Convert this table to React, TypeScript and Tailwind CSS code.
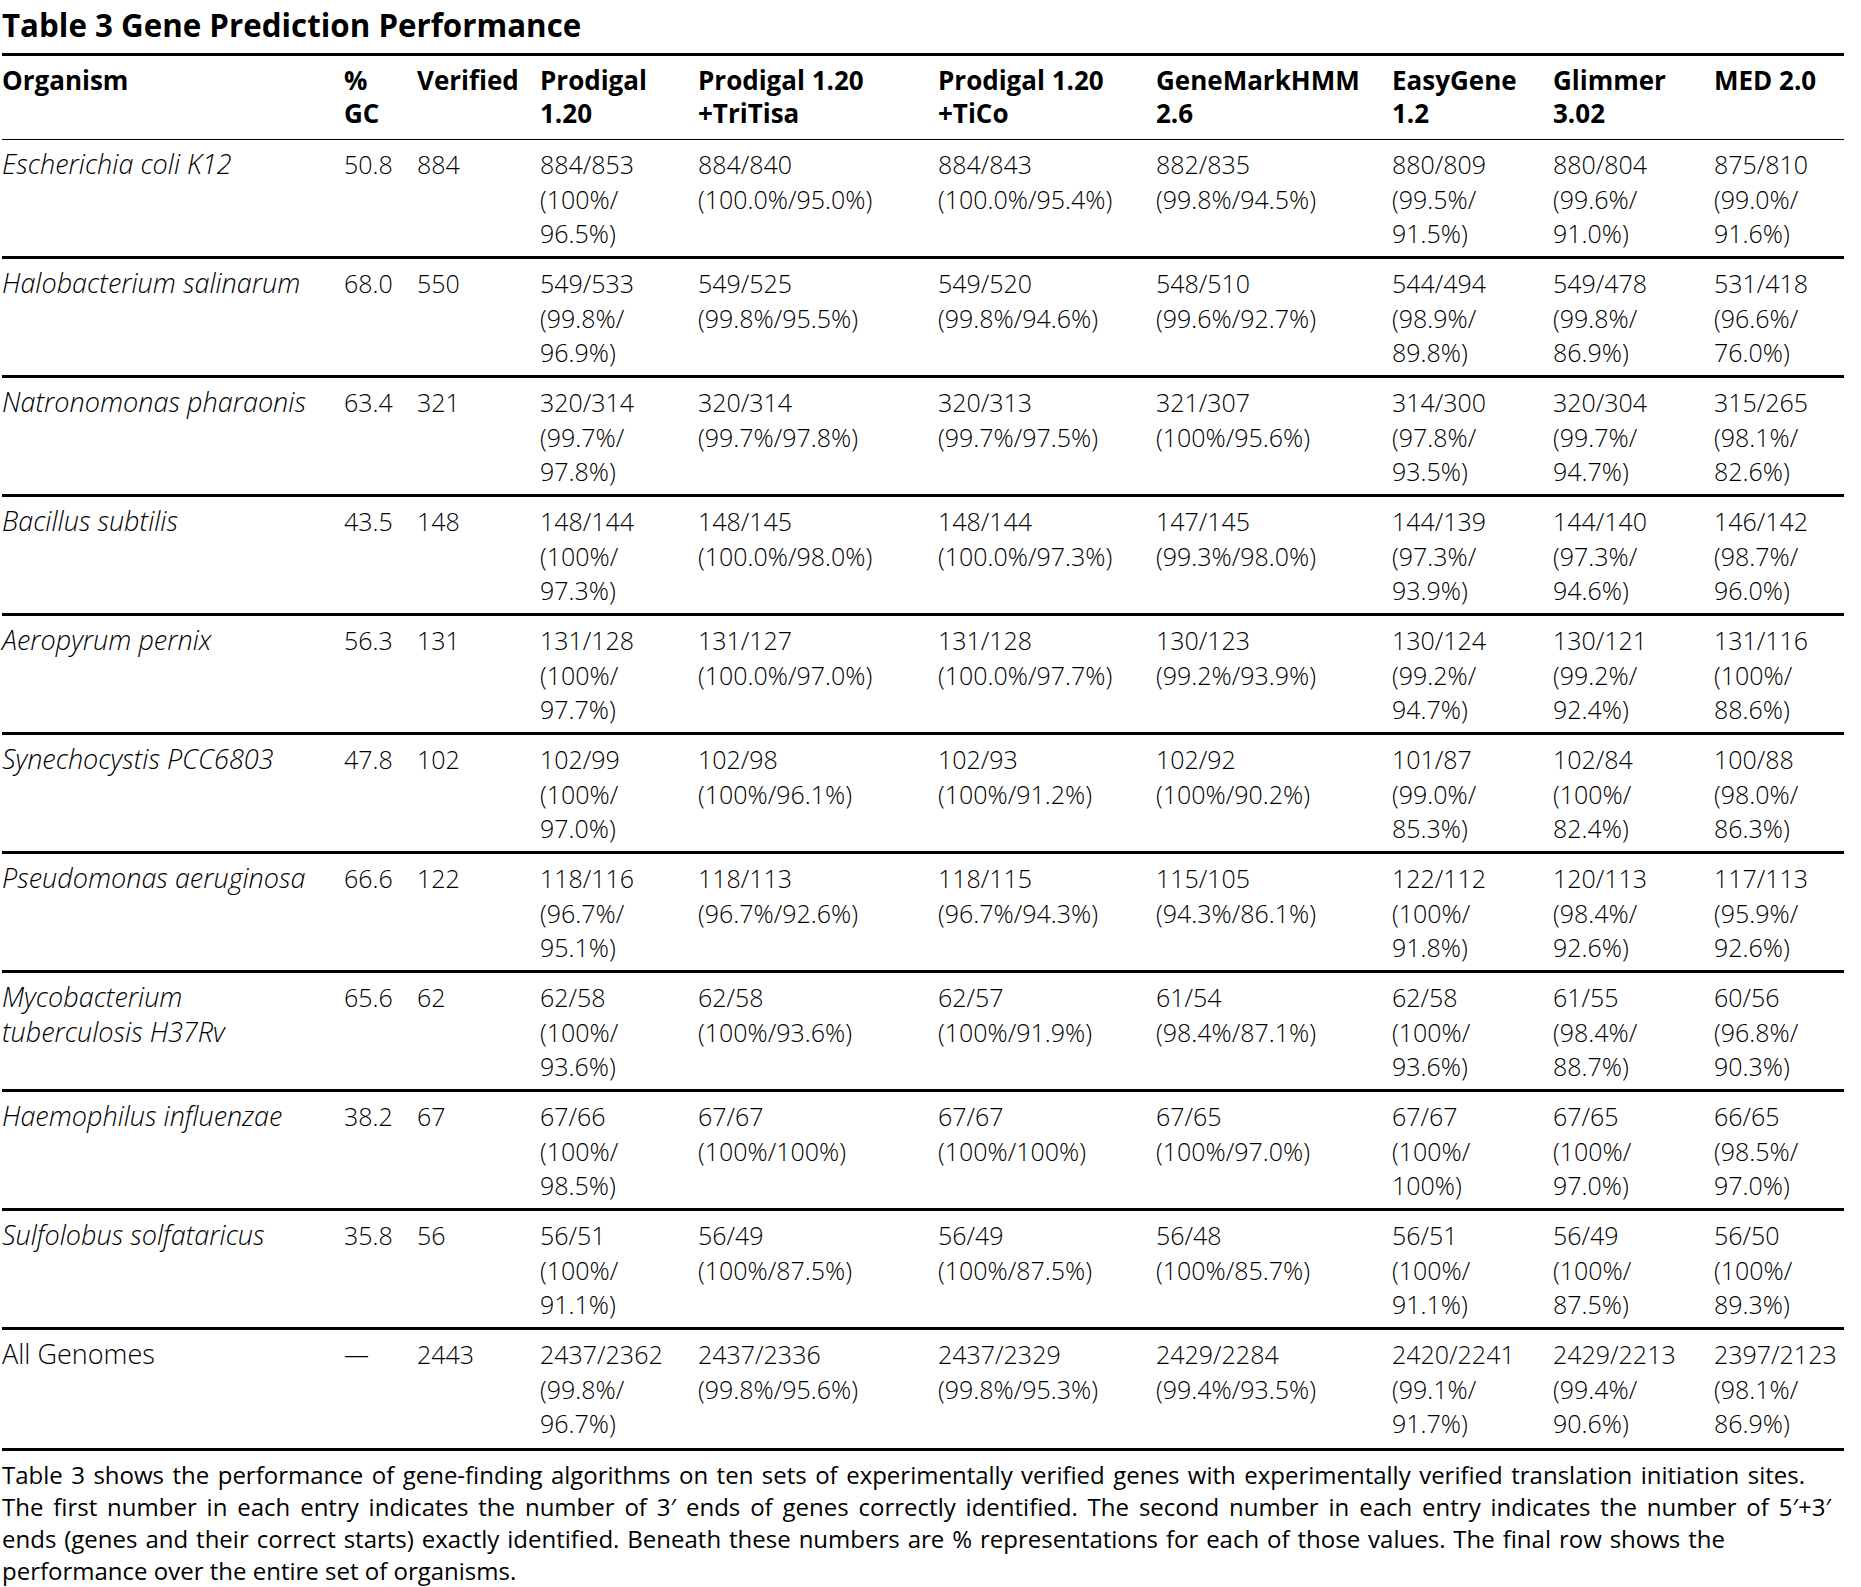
import React from "react";

type Row = { org: string[]; italic: boolean; gc: string; ver: string; cells: string[][] };

const rows: Row[] = [
  { org: ["Escherichia coli K12"], italic: true, gc: "50.8", ver: "884", cells: [["884/853", "(100%/", "96.5%)"], ["884/840", "(100.0%/95.0%)"], ["884/843", "(100.0%/95.4%)"], ["882/835", "(99.8%/94.5%)"], ["880/809", "(99.5%/", "91.5%)"], ["880/804", "(99.6%/", "91.0%)"], ["875/810", "(99.0%/", "91.6%)"]] },
  { org: ["Halobacterium salinarum"], italic: true, gc: "68.0", ver: "550", cells: [["549/533", "(99.8%/", "96.9%)"], ["549/525", "(99.8%/95.5%)"], ["549/520", "(99.8%/94.6%)"], ["548/510", "(99.6%/92.7%)"], ["544/494", "(98.9%/", "89.8%)"], ["549/478", "(99.8%/", "86.9%)"], ["531/418", "(96.6%/", "76.0%)"]] },
  { org: ["Natronomonas pharaonis"], italic: true, gc: "63.4", ver: "321", cells: [["320/314", "(99.7%/", "97.8%)"], ["320/314", "(99.7%/97.8%)"], ["320/313", "(99.7%/97.5%)"], ["321/307", "(100%/95.6%)"], ["314/300", "(97.8%/", "93.5%)"], ["320/304", "(99.7%/", "94.7%)"], ["315/265", "(98.1%/", "82.6%)"]] },
  { org: ["Bacillus subtilis"], italic: true, gc: "43.5", ver: "148", cells: [["148/144", "(100%/", "97.3%)"], ["148/145", "(100.0%/98.0%)"], ["148/144", "(100.0%/97.3%)"], ["147/145", "(99.3%/98.0%)"], ["144/139", "(97.3%/", "93.9%)"], ["144/140", "(97.3%/", "94.6%)"], ["146/142", "(98.7%/", "96.0%)"]] },
  { org: ["Aeropyrum pernix"], italic: true, gc: "56.3", ver: "131", cells: [["131/128", "(100%/", "97.7%)"], ["131/127", "(100.0%/97.0%)"], ["131/128", "(100.0%/97.7%)"], ["130/123", "(99.2%/93.9%)"], ["130/124", "(99.2%/", "94.7%)"], ["130/121", "(99.2%/", "92.4%)"], ["131/116", "(100%/", "88.6%)"]] },
  { org: ["Synechocystis PCC6803"], italic: true, gc: "47.8", ver: "102", cells: [["102/99", "(100%/", "97.0%)"], ["102/98", "(100%/96.1%)"], ["102/93", "(100%/91.2%)"], ["102/92", "(100%/90.2%)"], ["101/87", "(99.0%/", "85.3%)"], ["102/84", "(100%/", "82.4%)"], ["100/88", "(98.0%/", "86.3%)"]] },
  { org: ["Pseudomonas aeruginosa"], italic: true, gc: "66.6", ver: "122", cells: [["118/116", "(96.7%/", "95.1%)"], ["118/113", "(96.7%/92.6%)"], ["118/115", "(96.7%/94.3%)"], ["115/105", "(94.3%/86.1%)"], ["122/112", "(100%/", "91.8%)"], ["120/113", "(98.4%/", "92.6%)"], ["117/113", "(95.9%/", "92.6%)"]] },
  { org: ["Mycobacterium", "tuberculosis H37Rv"], italic: true, gc: "65.6", ver: "62", cells: [["62/58", "(100%/", "93.6%)"], ["62/58", "(100%/93.6%)"], ["62/57", "(100%/91.9%)"], ["61/54", "(98.4%/87.1%)"], ["62/58", "(100%/", "93.6%)"], ["61/55", "(98.4%/", "88.7%)"], ["60/56", "(96.8%/", "90.3%)"]] },
  { org: ["Haemophilus influenzae"], italic: true, gc: "38.2", ver: "67", cells: [["67/66", "(100%/", "98.5%)"], ["67/67", "(100%/100%)"], ["67/67", "(100%/100%)"], ["67/65", "(100%/97.0%)"], ["67/67", "(100%/", "100%)"], ["67/65", "(100%/", "97.0%)"], ["66/65", "(98.5%/", "97.0%)"]] },
  { org: ["Sulfolobus solfataricus"], italic: true, gc: "35.8", ver: "56", cells: [["56/51", "(100%/", "91.1%)"], ["56/49", "(100%/87.5%)"], ["56/49", "(100%/87.5%)"], ["56/48", "(100%/85.7%)"], ["56/51", "(100%/", "91.1%)"], ["56/49", "(100%/", "87.5%)"], ["56/50", "(100%/", "89.3%)"]] },
  { org: ["All Genomes"], italic: false, gc: "\u2014", ver: "2443", cells: [["2437/2362", "(99.8%/", "96.7%)"], ["2437/2336", "(99.8%/95.6%)"], ["2437/2329", "(99.8%/95.3%)"], ["2429/2284", "(99.4%/93.5%)"], ["2420/2241", "(99.1%/", "91.7%)"], ["2429/2213", "(99.4%/", "90.6%)"], ["2397/2123", "(98.1%/", "86.9%)"]] },
];

const headers: string[][] = [
  ["Organism"],
  ["%", "GC"],
  ["Verified"],
  ["Prodigal", "1.20"],
  ["Prodigal 1.20", "+TriTisa"],
  ["Prodigal 1.20", "+TiCo"],
  ["GeneMarkHMM", "2.6"],
  ["EasyGene", "1.2"],
  ["Glimmer", "3.02"],
  ["MED 2.0"],
];

const grid = "grid grid-cols-[342px_73px_123px_158px_240px_218px_236px_161px_161px_130px]";

function Lines({ lines, className = "" }: { lines: string[]; className?: string }) {
  return (
    <div className={className}>
      {lines.map((l, i) => (
        <div key={i} className="whitespace-nowrap">
          {l}
        </div>
      ))}
    </div>
  );
}

export default function App() {
  return (
    <div className="w-[1861px] h-[1587px] bg-white text-black font-['Open_Sans',sans-serif] overflow-hidden">
      <div className="h-[53px] pt-[5px] pl-[2px] text-[31.3px] leading-[40px] font-bold text-black">
        Table 3 Gene Prediction Performance
      </div>
      <div className="ml-[2px] w-[1842px] border-t-[3px] border-black">
        <div className={`${grid} h-[84px] pt-[8px] border-b border-black text-[26px] leading-[33px] font-bold text-black`}>
          {headers.map((h, i) => (
            <Lines key={i} lines={h} />
          ))}
        </div>
        {rows.map((r, ri) => (
          <div
            key={ri}
            className={`${grid} ${ri === rows.length - 1 ? "h-[121px]" : "h-[119px]"} pt-[7px] border-b-[3px] border-black text-[25px] leading-[34.5px] font-light text-black`}
          >
            <Lines lines={r.org} className={`text-[27px] ${r.italic ? "italic" : ""}`} />
            <Lines lines={[r.gc]} />
            <Lines lines={[r.ver]} />
            {r.cells.map((c, ci) => (
              <Lines key={ci} lines={c} />
            ))}
          </div>
        ))}
      </div>
      <div className="mt-[8px] ml-[2px] text-[24px] leading-[32px] text-black">
        <div className="w-[1803px] whitespace-nowrap text-justify [text-align-last:justify]">
          Table 3 shows the performance of gene-finding algorithms on ten sets of experimentally verified genes with experimentally verified translation initiation sites.
        </div>
        <div className="w-[1829px] whitespace-nowrap text-justify [text-align-last:justify]">
          The first number in each entry indicates the number of 3{"\u2032"} ends of genes correctly identified. The second number in each entry indicates the number of 5{"\u2032"}+3{"\u2032"}
        </div>
        <div className="w-[1723px] whitespace-nowrap text-justify [text-align-last:justify]">
          ends (genes and their correct starts) exactly identified. Beneath these numbers are % representations for each of those values. The final row shows the
        </div>
        <div className="whitespace-nowrap">performance over the entire set of organisms.</div>
      </div>
    </div>
  );
}
